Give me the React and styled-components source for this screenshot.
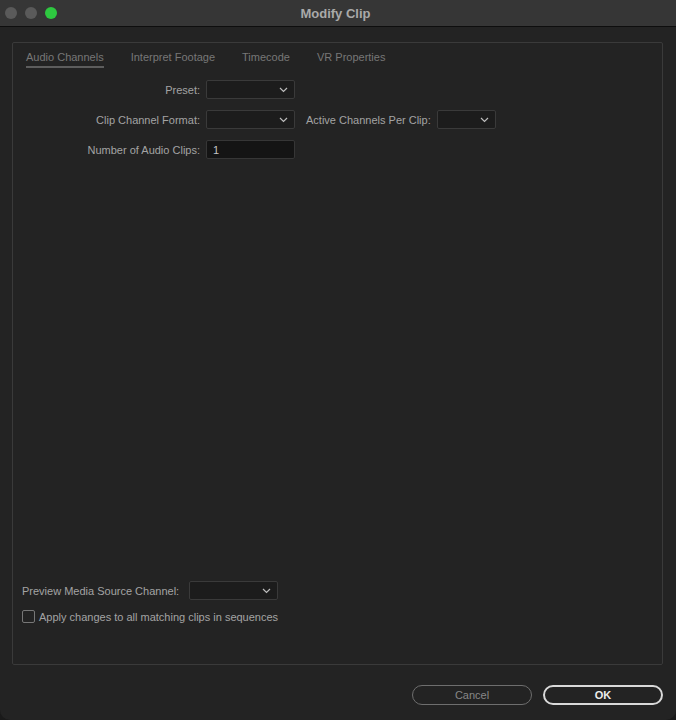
import React from 'react';
import styled, { createGlobalStyle } from 'styled-components';

const GlobalStyle = createGlobalStyle`
  html, body {
    margin: 0;
    padding: 0;
    background: #1a1a1a;
  }
  * {
    box-sizing: border-box;
  }
`;

const Window = styled.div`
  width: 676px;
  height: 720px;
  display: flex;
  flex-direction: column;
  background: #232323;
  border-radius: 0 0 10px 10px;
  overflow: hidden;
  font-family: 'Liberation Sans', Arial, sans-serif;
`;

const TitleBar = styled.div`
  height: 27px;
  flex: none;
  display: flex;
  align-items: center;
  background: #363636;
  border-bottom: 1px solid #0e0e0e;
  padding-left: 5px;
`;

const Lights = styled.div`
  display: flex;
  gap: 8px;
`;

const Light = styled.span`
  width: 12px;
  height: 12px;
  border-radius: 50%;
  background: ${(props) => props.color};
`;

const Title = styled.div`
  flex: 1;
  text-align: center;
  margin-right: 62px;
  font-size: 13px;
  font-weight: bold;
  color: #a9a9a9;
`;

const Body = styled.div`
  flex: 1;
  display: flex;
  flex-direction: column;
  padding: 15px 13px 15px 12px;
`;

const Panel = styled.div`
  height: 623px;
  border: 1px solid #3a3a3a;
  border-radius: 2px;
  display: flex;
  flex-direction: column;
  padding: 6px 0 0 13px;
`;

const Tabs = styled.div`
  display: flex;
  gap: 27px;
`;

const Tab = styled.div`
  font-size: 11px;
  color: #777;
  padding: 2px 0 3px;
  border-bottom: 2px solid ${(props) => (props.active ? '#5d5d5d' : 'transparent')};
`;

const Form = styled.div`
  display: grid;
  grid-template-columns: 174px 89px max-content 59px;
  justify-content: start;
  column-gap: 6px;
  row-gap: 11px;
  margin-top: 12px;
  align-items: center;
`;

const Label = styled.div`
  font-size: 11px;
  color: #a3a3a3;
  text-align: ${(props) => (props.left ? 'left' : 'right')};
  white-space: nowrap;
  padding: ${(props) => (props.left ? '0 0 0 5px' : '0')};
`;

const Select = styled.div`
  height: 19px;
  width: ${(props) => props.width || 'auto'};
  background: #1c1c1c;
  border: 1px solid #3a3a3a;
  border-radius: 2px;
  display: flex;
  align-items: center;
  justify-content: flex-end;
  padding-right: 6px;
`;

const Input = styled.div`
  height: 19px;
  background: #141414;
  border: 1px solid #363636;
  border-radius: 2px;
  font-size: 11px;
  color: #c4c4c4;
  display: flex;
  align-items: center;
  padding-left: 6px;
`;

const Spacer = styled.div`
  flex: 1;
`;

const BottomRow = styled.div`
  display: flex;
  align-items: center;
  gap: 10px;
  margin-left: -4px;
`;

const CheckRow = styled.label`
  display: flex;
  align-items: center;
  gap: 4px;
  margin: 10px 0 41px -4px;
  font-size: 11px;
  color: #a3a3a3;
`;

const Box = styled.span`
  width: 13px;
  height: 13px;
  border: 1px solid #777;
  border-radius: 2px;
`;

const Footer = styled.div`
  display: flex;
  justify-content: flex-end;
  gap: 11px;
  margin-top: 20px;
`;

const Button = styled.button`
  width: 120px;
  height: 20px;
  border-radius: 10px;
  background: transparent;
  font-family: 'Liberation Sans', Arial, sans-serif;
  font-size: 11px;
  font-weight: ${(props) => (props.primary ? 'bold' : 'normal')};
  color: ${(props) => (props.primary ? '#ececec' : '#878787')};
  border: ${(props) => (props.primary ? '2px solid #d9d9d9' : '1.5px solid #6e6e6e')};
`;

const Chevron = () => (
  <svg width="9" height="6" viewBox="0 0 9 6" fill="none">
    <path d="M1 1l3.5 3.5L8 1" stroke="#bdbdbd" strokeWidth="1.2" />
  </svg>
);

export default function App() {
  return (
    <>
      <GlobalStyle />
      <Window>
        <TitleBar>
          <Lights>
            <Light color="#5a5a5a" />
            <Light color="#5a5a5a" />
            <Light color="#2ec840" />
          </Lights>
          <Title>Modify Clip</Title>
        </TitleBar>
        <Body>
          <Panel>
            <Tabs>
              <Tab active>Audio Channels</Tab>
              <Tab>Interpret Footage</Tab>
              <Tab>Timecode</Tab>
              <Tab>VR Properties</Tab>
            </Tabs>
            <Form>
              <Label>Preset:</Label>
              <Select>
                <Chevron />
              </Select>
              <span />
              <span />
              <Label>Clip Channel Format:</Label>
              <Select>
                <Chevron />
              </Select>
              <Label left>Active Channels Per Clip:</Label>
              <Select>
                <Chevron />
              </Select>
              <Label>Number of Audio Clips:</Label>
              <Input>1</Input>
              <span />
              <span />
            </Form>
            <Spacer />
            <BottomRow>
              <Label>Preview Media Source Channel:</Label>
              <Select width="89px">
                <Chevron />
              </Select>
            </BottomRow>
            <CheckRow>
              <Box />
              Apply changes to all matching clips in sequences
            </CheckRow>
          </Panel>
          <Footer>
            <Button>Cancel</Button>
            <Button primary>OK</Button>
          </Footer>
        </Body>
      </Window>
    </>
  );
}
